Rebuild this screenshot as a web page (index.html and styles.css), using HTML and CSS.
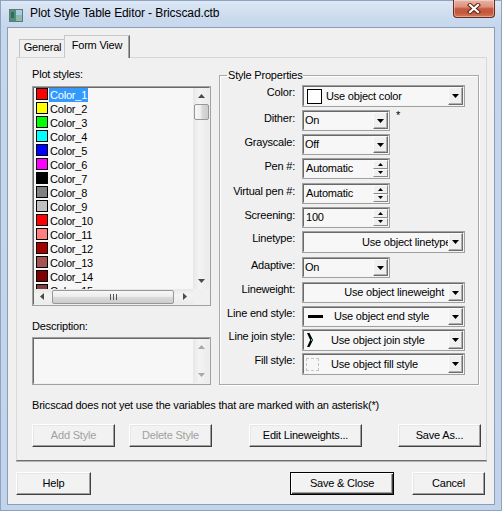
FILE: index.html
```html
<!DOCTYPE html>
<html>
<head>
<meta charset="utf-8">
<title>Plot Style Table Editor - Bricscad.ctb</title>
<link rel="stylesheet" href="styles.css">
</head>
<body>
<div class="window">
  <div class="titlebar">
    <svg class="app-icon" width="14" height="13" viewBox="0 0 14 13">
      <rect x="0.5" y="0.5" width="13" height="12" fill="#d6e4ec" stroke="#66767c"/>
      <rect x="1" y="1" width="6" height="11" fill="#4f8f7c"/>
      <rect x="7" y="1" width="6" height="5" fill="#a9cbe0"/>
      <rect x="7" y="6" width="6" height="6" fill="#8fb9a8"/>
      <rect x="2" y="3" width="3" height="6" fill="#2f6e5e"/>
    </svg>
    <span class="title">Plot Style Table Editor - Bricscad.ctb</span>
    <div class="close">
      <svg width="14" height="11" viewBox="0 0 14 11">
        <path d="M3 2L11 9M11 2L3 9" stroke="#5b2418" stroke-width="4.2" stroke-linecap="square"/>
        <path d="M3 2L11 9M11 2L3 9" stroke="#ffffff" stroke-width="2.2" stroke-linecap="square"/>
      </svg>
    </div>
  </div>

  <div class="client">
    <div class="tabs">
      <div class="tab">General</div>
      <div class="tab active">Form View</div>
    </div>

    <div class="panel">
      <div class="main">
        <div class="left">
          <div class="lbl">Plot styles:</div>
          <div class="sunken list">
            <div class="sunken-in list-grid">
              <div class="items">
                <div class="item"><span class="sw" style="background:#ff0000"></span><span class="name sel">Color_1</span></div>
                <div class="item"><span class="sw" style="background:#ffff00"></span><span class="name">Color_2</span></div>
                <div class="item"><span class="sw" style="background:#00ff00"></span><span class="name">Color_3</span></div>
                <div class="item"><span class="sw" style="background:#00ffff"></span><span class="name">Color_4</span></div>
                <div class="item"><span class="sw" style="background:#0000ff"></span><span class="name">Color_5</span></div>
                <div class="item"><span class="sw" style="background:#ff00ff"></span><span class="name">Color_6</span></div>
                <div class="item"><span class="sw" style="background:#000000"></span><span class="name">Color_7</span></div>
                <div class="item"><span class="sw" style="background:#808080"></span><span class="name">Color_8</span></div>
                <div class="item"><span class="sw" style="background:#c0c0c0"></span><span class="name">Color_9</span></div>
                <div class="item"><span class="sw" style="background:#ff0000"></span><span class="name">Color_10</span></div>
                <div class="item"><span class="sw" style="background:#ff7f7f"></span><span class="name">Color_11</span></div>
                <div class="item"><span class="sw" style="background:#a50000"></span><span class="name">Color_12</span></div>
                <div class="item"><span class="sw" style="background:#a55252"></span><span class="name">Color_13</span></div>
                <div class="item"><span class="sw" style="background:#7f0000"></span><span class="name">Color_14</span></div>
                <div class="item"><span class="sw" style="background:#7f3f3f"></span><span class="name">Color_15</span></div>
              </div>
              <div class="vscroll">
                <div class="arrow"><svg width="7" height="4" viewBox="0 0 7 4"><path d="M3.5 0L7 4H0Z" fill="#4a4a4a"/></svg></div>
                <div class="thumb-v"></div>
                <div class="track"></div>
                <div class="arrow"><svg width="7" height="4" viewBox="0 0 7 4"><path d="M0 0H7L3.5 4Z" fill="#4a4a4a"/></svg></div>
              </div>
              <div class="hscroll">
                <div class="harrow"><svg width="4" height="7" viewBox="0 0 4 7"><path d="M0 3.5L4 0V7Z" fill="#4a4a4a"/></svg></div>
                <div class="thumb-h">
                  <svg width="7" height="6" viewBox="0 0 7 6"><path d="M0.5 0V6M3.5 0V6M6.5 0V6" stroke="#555" stroke-width="1"/></svg>
                </div>
                <div class="track"></div>
                <div class="harrow"><svg width="4" height="7" viewBox="0 0 4 7"><path d="M0 0L4 3.5L0 7Z" fill="#4a4a4a"/></svg></div>
              </div>
              <div class="corner"></div>
            </div>
          </div>
          <div class="lbl desc-lbl">Description:</div>
          <div class="sunken desc">
            <div class="sunken-in desc-grid">
              <div class="desc-text"></div>
              <div class="vscroll">
                <div class="arrow"><svg width="7" height="4" viewBox="0 0 7 4"><path d="M3.5 0L7 4H0Z" fill="#a8a8a8"/></svg></div>
                <div class="track"></div>
                <div class="arrow"><svg width="7" height="4" viewBox="0 0 7 4"><path d="M0 0H7L3.5 4Z" fill="#a8a8a8"/></svg></div>
              </div>
            </div>
          </div>
        </div>

        <fieldset class="group">
          <legend>Style Properties</legend>
          <div class="props">
            <div class="plabel big">Color:</div>
            <div class="ctl">
              <div class="combo w-l h22"><div class="combo-in">
                <span class="swatch-white"></span>
                <span class="val v-color">Use object color</span>
                <span class="dd"><svg width="7" height="4" viewBox="0 0 7 4"><path d="M0 0H7L3.5 4Z" fill="#000"/></svg></span>
              </div></div>
            </div>

            <div class="plabel">Dither:</div>
            <div class="ctl">
              <div class="combo w-s"><div class="combo-in">
                <span class="val">On</span>
                <span class="dd"><svg width="7" height="4" viewBox="0 0 7 4"><path d="M0 0H7L3.5 4Z" fill="#000"/></svg></span>
              </div></div>
              <span class="ast">*</span>
            </div>

            <div class="plabel">Grayscale:</div>
            <div class="ctl">
              <div class="combo w-s"><div class="combo-in">
                <span class="val">Off</span>
                <span class="dd"><svg width="7" height="4" viewBox="0 0 7 4"><path d="M0 0H7L3.5 4Z" fill="#000"/></svg></span>
              </div></div>
            </div>

            <div class="plabel">Pen #:</div>
            <div class="ctl">
              <div class="combo w-s"><div class="combo-in">
                <span class="val v-spin">Automatic</span>
                <span class="spin">
                  <span class="sb"><svg width="5" height="3" viewBox="0 0 5 3"><path d="M2.5 0L5 3H0Z" fill="#000"/></svg></span>
                  <span class="sb"><svg width="5" height="3" viewBox="0 0 5 3"><path d="M0 0H5L2.5 3Z" fill="#000"/></svg></span>
                </span>
              </div></div>
            </div>

            <div class="plabel">Virtual pen #:</div>
            <div class="ctl">
              <div class="combo w-s"><div class="combo-in">
                <span class="val v-spin">Automatic</span>
                <span class="spin">
                  <span class="sb"><svg width="5" height="3" viewBox="0 0 5 3"><path d="M2.5 0L5 3H0Z" fill="#000"/></svg></span>
                  <span class="sb"><svg width="5" height="3" viewBox="0 0 5 3"><path d="M0 0H5L2.5 3Z" fill="#000"/></svg></span>
                </span>
              </div></div>
            </div>

            <div class="plabel">Screening:</div>
            <div class="ctl">
              <div class="combo w-s"><div class="combo-in">
                <span class="val v-spin">100</span>
                <span class="spin">
                  <span class="sb"><svg width="5" height="3" viewBox="0 0 5 3"><path d="M2.5 0L5 3H0Z" fill="#000"/></svg></span>
                  <span class="sb"><svg width="5" height="3" viewBox="0 0 5 3"><path d="M0 0H5L2.5 3Z" fill="#000"/></svg></span>
                </span>
              </div></div>
            </div>

            <div class="plabel big">Linetype:</div>
            <div class="ctl">
              <div class="combo w-l h22"><div class="combo-in">
                <span class="val v-linetype">Use object linetype</span>
                <span class="dd"><svg width="7" height="4" viewBox="0 0 7 4"><path d="M0 0H7L3.5 4Z" fill="#000"/></svg></span>
              </div></div>
            </div>

            <div class="plabel">Adaptive:</div>
            <div class="ctl">
              <div class="combo w-s"><div class="combo-in">
                <span class="val">On</span>
                <span class="dd"><svg width="7" height="4" viewBox="0 0 7 4"><path d="M0 0H7L3.5 4Z" fill="#000"/></svg></span>
              </div></div>
            </div>

            <div class="plabel big">Lineweight:</div>
            <div class="ctl">
              <div class="combo w-l"><div class="combo-in">
                <span class="val v-right">Use object lineweight</span>
                <span class="dd"><svg width="7" height="4" viewBox="0 0 7 4"><path d="M0 0H7L3.5 4Z" fill="#000"/></svg></span>
              </div></div>
            </div>

            <div class="plabel big">Line end style:</div>
            <div class="ctl">
              <div class="combo w-l"><div class="combo-in">
                <span class="endline"></span>
                <span class="val v-end">Use object end style</span>
                <span class="dd"><svg width="7" height="4" viewBox="0 0 7 4"><path d="M0 0H7L3.5 4Z" fill="#000"/></svg></span>
              </div></div>
            </div>

            <div class="plabel big">Line join style:</div>
            <div class="ctl">
              <div class="combo w-l h22"><div class="combo-in">
                <svg class="join" width="6" height="14" viewBox="0 0 6 14">
                  <path d="M0 0H2.5L6 7L2.5 14H0L3.2 7Z" fill="#000"/>
                  <rect x="4" y="6" width="1" height="2" fill="#19c6d6"/>
                </svg>
                <span class="val v-join">Use object join style</span>
                <span class="dd"><svg width="7" height="4" viewBox="0 0 7 4"><path d="M0 0H7L3.5 4Z" fill="#000"/></svg></span>
              </div></div>
            </div>

            <div class="plabel big">Fill style:</div>
            <div class="ctl">
              <div class="combo w-l h22"><div class="combo-in">
                <span class="fillbox"></span>
                <span class="val v-fill">Use object fill style</span>
                <span class="dd"><svg width="7" height="4" viewBox="0 0 7 4"><path d="M0 0H7L3.5 4Z" fill="#000"/></svg></span>
              </div></div>
            </div>
          </div>
        </fieldset>
      </div>

      <p class="note">Bricscad does not yet use the variables that are marked with an asterisk(*)</p>

      <div class="actions">
        <button class="btn disabled b-add">Add Style</button>
        <button class="btn disabled b-del">Delete Style</button>
        <button class="btn b-edit">Edit Lineweights...</button>
        <button class="btn b-saveas">Save As...</button>
      </div>
    </div>

    <div class="footer">
      <button class="btn b-help">Help</button>
      <button class="btn default b-save">Save &amp; Close</button>
      <button class="btn b-cancel">Cancel</button>
    </div>
  </div>
</div>
</body>
</html>
```

FILE: styles.css
```css
* { box-sizing: border-box; }
html, body { margin: 0; padding: 0; }
body {
  width: 502px;
  height: 511px;
  overflow: hidden;
  background: #c3d5eb;
  font-family: "Liberation Sans", Arial, sans-serif;
  font-size: 11px;
  line-height: 13px;
  letter-spacing: -0.2px;
  color: #000;
}

.window {
  width: 502px;
  height: 511px;
  display: flex;
  flex-direction: column;
  border: 1px solid #8ea3bd;
  padding: 0 6px 5px 6px;
  background: linear-gradient(180deg, #dde8f5 0, #cddcef 14px, #c5d7ec 27px, #c2d4eb 100%);
}

/* title bar */
.titlebar {
  height: 26px;
  flex: none;
  display: flex;
  align-items: flex-start;
}
.app-icon { margin: 8px 0 0 2px; flex: none; }
.title {
  margin: 5px 0 0 7px;
  font-size: 12px;
  line-height: 15px;
  letter-spacing: -0.1px;
  color: #000;
  white-space: nowrap;
}
.close {
  flex: none;
  margin: -1px 0 0 auto;
  width: 42px;
  height: 18px;
  border: 1px solid #6d2b1e;
  border-top: none;
  border-radius: 0 0 4px 4px;
  background: linear-gradient(180deg, #eab5a6 0, #dc917b 40%, #c65a3d 52%, #c4583b 75%, #d07a5c 100%);
  box-shadow: inset 0 0 0 1px rgba(255, 255, 255, 0.35);
  display: flex;
  align-items: center;
  justify-content: center;
}

/* client area */
.client {
  flex: 1;
  background: #f0f0f0;
  border: 1px solid #8d9db3;
  padding: 7px 0 0 8px;
  display: flex;
  flex-direction: column;
}

.tabs {
  display: flex;
  align-items: flex-end;
  height: 22px;
  margin-left: 3px;
  flex: none;
}
.tab {
  width: 47px;
  height: 18px;
  border: 1px solid #c2c2c2;
  border-bottom: none;
  padding-top: 1px;
  text-align: center;
  white-space: nowrap;
  background: #f0f0f0;
}
.tab.active {
  width: 66px;
  height: 23px;
  margin-left: -2px;
  margin-bottom: -1px;
  padding-top: 3px;
  border-color: #c8c8c8 #696969 #c8c8c8 #c8c8c8;
  box-shadow: inset -1px 0 0 #a0a0a0;
  z-index: 1;
}

.panel {
  width: 471px;
  height: 404px;
  flex: none;
  border: 1px solid;
  border-color: #d6d6d6 #d8d8d8 #6d6d6d #dadada;
  box-shadow: 0 1px 0 #b4b4b4;
  padding: 10px 0 0 15px;
}

.main {
  display: flex;
  align-items: flex-start;
}
.left { width: 179px; flex: none; }
.lbl { height: 13px; white-space: nowrap; }
.desc-lbl { margin-top: 14px; }

.sunken { border: 1px solid #a0a0a0; }
.sunken-in {
  height: 100%;
  border: 1px solid;
  border-color: #696969 #f0f0f0 #f0f0f0 #696969;
  background: #f7f7f7;
}

.list { margin-top: 5px; height: 220px; }
.list-grid {
  display: grid;
  grid-template-columns: 159px 16px;
  grid-template-rows: 201px 15px;
  overflow: hidden;
}
.items { overflow: hidden; }
.item {
  height: 14px;
  display: flex;
  align-items: flex-start;
  padding-left: 2px;
  white-space: nowrap;
}
.sw {
  width: 12px;
  height: 12px;
  border: 1px solid #000;
  flex: none;
}
.name {
  margin-left: 1px;
  padding: 0 1px;
  height: 14px;
  line-height: 14px;
}
.sel { background: #3399ff; color: #fff; }

.vscroll {
  display: flex;
  flex-direction: column;
  background: linear-gradient(90deg, #e7e7e7 0, #f3f3f3 40%, #ebebeb 100%);
}
.arrow {
  height: 16px;
  flex: none;
  display: flex;
  align-items: center;
  justify-content: center;
}
.thumb-v {
  height: 16px;
  flex: none;
  margin: 0 0 0 1px;
  border: 1px solid #979797;
  border-radius: 2px;
  background: linear-gradient(90deg, #f7f7f7 0, #ededed 45%, #d9d9d9 55%, #cdcdcd 100%);
}
.track { flex: 1; }
.hscroll {
  display: flex;
  align-items: center;
  background: linear-gradient(180deg, #e7e7e7 0, #f3f3f3 40%, #ebebeb 100%);
}
.harrow {
  width: 16px;
  height: 15px;
  flex: none;
  display: flex;
  align-items: center;
  justify-content: center;
}
.thumb-h {
  width: 122px;
  height: 14px;
  flex: none;
  margin-left: 2px;
  border: 1px solid #979797;
  border-radius: 2px;
  background: linear-gradient(180deg, #f7f7f7 0, #ededed 45%, #d9d9d9 55%, #cdcdcd 100%);
  display: flex;
  align-items: center;
  justify-content: center;
}
.corner { background: #f0f0f0; }

.desc { margin-top: 4px; height: 48px; }
.desc-grid {
  display: grid;
  grid-template-columns: 159px 16px;
}

/* style properties group */
.group {
  margin: 1px 0 0 8px;
  width: 260px;
  min-width: 0;
  padding: 3px 0 9px 0;
  border: 1px solid #a9a9a9;
  box-shadow: inset 1px 1px 0 #fff, 1px 1px 0 #fff;
}
.group legend {
  margin-left: 7px;
  padding: 0 1px;
  line-height: 13px;
}
.props {
  display: grid;
  grid-template-columns: 75px 176px;
  column-gap: 7px;
  grid-template-rows: 25px 24px 24px 25px 24px 24px 26px 25px 24px 23px 24px 22px;
}
.plabel {
  text-align: right;
  padding-top: 2px;
  white-space: nowrap;
}
.plabel.big { padding-top: 1px; }
.ctl {
  display: flex;
  align-items: flex-start;
}
.ast { margin-left: 6px; line-height: 11px; }

.combo {
  height: 21px;
  flex: none;
  border: 1px solid #a0a0a0;
}
.w-s { width: 88px; }
.w-l { width: 163px; }
.h22 { height: 22px; }
.combo-in {
  height: 100%;
  display: flex;
  align-items: center;
  border: 1px solid;
  border-color: #696969 #f4f4f4 #f4f4f4 #696969;
  background: #f7f7f7;
}
.val {
  flex: 1;
  min-width: 0;
  padding-left: 1px;
  white-space: nowrap;
  overflow: hidden;
}
.v-spin { padding-left: 2px; }
.v-color { padding-left: 4px; }
.v-linetype { padding-left: 58px; }
.v-right { text-align: right; padding-right: 4px; }
.v-end { padding-left: 11px; }
.v-join { padding-left: 18px; }
.v-fill { padding-left: 12px; }

.dd {
  width: 15px;
  height: 100%;
  flex: none;
  display: flex;
  align-items: center;
  justify-content: center;
  background: #f0f0f0;
  border: 1px solid;
  border-color: #fbfbfb #6d6d6d #6d6d6d #fbfbfb;
  box-shadow: inset -1px -1px 0 #b0b0b0;
}
.spin {
  width: 15px;
  height: 100%;
  flex: none;
  display: flex;
  flex-direction: column;
}
.sb {
  flex: 1;
  display: flex;
  align-items: center;
  justify-content: center;
  background: #f0f0f0;
  border: 1px solid;
  border-color: #fbfbfb #8a8a8a #8a8a8a #fbfbfb;
}

.swatch-white {
  width: 15px;
  height: 15px;
  flex: none;
  margin-left: 3px;
  border: 1px solid #000;
  background: #fff;
}
.endline {
  width: 15px;
  height: 3px;
  flex: none;
  margin-left: 4px;
  background: #000;
}
.join { margin-left: 3px; flex: none; }
.fillbox {
  width: 13px;
  height: 13px;
  flex: none;
  margin-left: 2px;
  border: 1px dashed #c4c4c4;
}

.note {
  margin: 14px 0 0 0;
  height: 13px;
  white-space: nowrap;
}

/* buttons */
.actions { display: flex; margin-top: 12px; }
.footer { display: flex; margin-top: 11px; }
.btn {
  height: 23px;
  padding: 0;
  font: inherit;
  letter-spacing: inherit;
  line-height: 13px;
  color: #000;
  background: #f2f2f2;
  border: 1px solid;
  border-color: #ffffff #404040 #404040 #ffffff;
  box-shadow: inset -1px -1px 0 #a0a0a0, inset 1px 1px 0 #e6e6e6;
  text-align: center;
  white-space: nowrap;
}
.btn.disabled { color: #a0a0a0; }
.btn.default {
  border-color: #000;
  box-shadow: inset 1px 1px 0 #fff, inset -1px -1px 0 #404040, inset -2px -2px 0 #a0a0a0;
}
.b-add { width: 83px; }
.b-del { width: 83px; margin-left: 14px; }
.b-edit { width: 113px; margin-left: 37px; }
.b-saveas { width: 83px; margin-left: 36px; }
.b-help { width: 75px; }
.b-save { width: 104px; margin-left: 199px; }
.b-cancel { width: 73px; margin-left: 18px; }
```
